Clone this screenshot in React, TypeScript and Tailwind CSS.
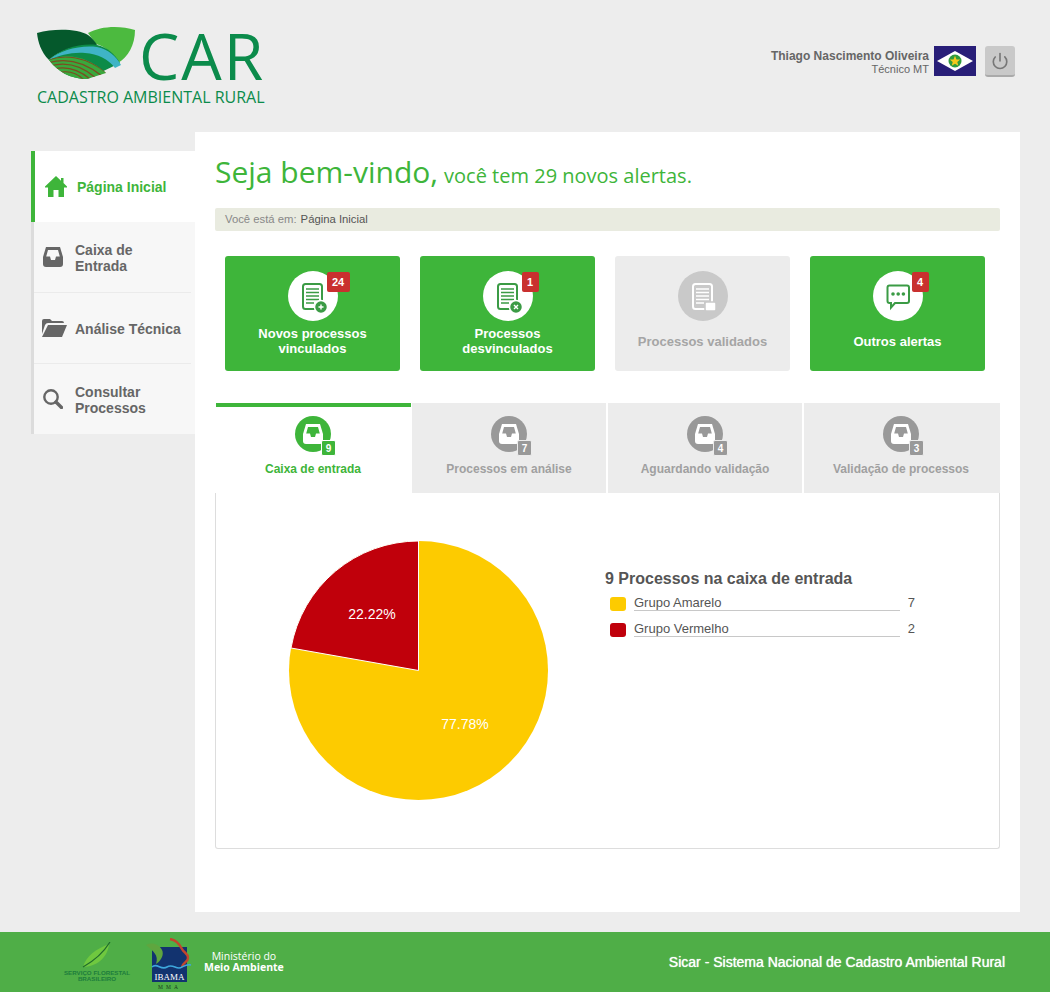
import { Power } from "lucide-react";
import clsx from "clsx";

const GREEN = "#3eb53a";

function TrayIcon({ color, inner, className }: { color: string; inner: string; className?: string }) {
  return (
    <svg viewBox="0 0 20 20" className={className}>
      <path d="M3 0H17L20 10V17Q20 20 17 20H3Q0 20 0 17V10Z" fill={color} />
      <path d="M5 3H15L16.8 9.5H13L12 13H8L7 9.5H3.2Z" fill={inner} />
    </svg>
  );
}

function HomeIcon() {
  return (
    <svg viewBox="0 0 22 21" className="w-[22px] h-[21px] shrink-0" fill={GREEN}>
      <path d="M11 0L16 4.7V2H18.5V7L22 10.5V11.5H19V21H13.5V14H8.5V21H3V11.5H0V10.5Z" />
    </svg>
  );
}

function FolderIcon() {
  return (
    <svg viewBox="0 0 25 18" className="w-[25px] h-[18px] shrink-0 -ml-px" fill="#666">
      <path d="M0 15V2Q0 0 2 0H8L10 2H20Q22 2 22 4H6Q4 4 3 6Z" />
      <path d="M6 6H25L20 18H0Z" />
    </svg>
  );
}

function SearchIcon() {
  return (
    <svg viewBox="0 0 20 20" className="w-5 h-5 shrink-0" fill="none" stroke="#666">
      <circle cx="8" cy="8" r="6.7" strokeWidth="2.4" />
      <path d="M13 13L18.5 18.5" strokeWidth="3.4" strokeLinecap="round" />
    </svg>
  );
}

function Logo() {
  return (
    <svg viewBox="30 20 110 70" className="w-[110px] h-[70px] shrink-0">
      <defs>
        <clipPath id="field">
          <path d="M49 60C60 55 75 55 88 61C97 65 103 70 106 73L87 79C70 79 57 71 49 60Z" />
        </clipPath>
      </defs>
      <path d="M88 33C100 26 120 25 135 30C135 45 128 57 118 63C112 52 104 46 96 44Z" fill="#4cba3f" />
      <path d="M37 33C55 28 78 29 88 35C92 38 95 41 97 45C80 44 60 49 49 60C41 52 38 42 37 33Z" fill="#05592c" />
      <path d="M49 60C60 49 80 43 97 45C107 47 115 54 120 63L87 79C70 79 57 71 49 60Z" fill="#0d8b47" />
      <path d="M49 60C60 50 80 45 97 47C108 49 116 56 121 65L115 68C108 59 98 54 85 53C72 52 60 55 49 60Z" fill="#3fb4c6" />
      <g clipPath="url(#field)">
        <rect x="45" y="50" width="65" height="32" fill="#3aa83c" />
        <g fill="none" stroke="#7f4a22" strokeWidth="1.1">
          <path d="M48 60C64 54 86 56 108 74" />
          <path d="M48 63C64 58 82 60 102 76" />
          <path d="M50 66C64 62 80 64 96 78" />
          <path d="M54 69C66 66 78 69 90 79" />
          <path d="M58 73C68 70 76 72 84 80" />
        </g>
      </g>
    </svg>
  );
}

function Flag() {
  return (
    <svg viewBox="0 0 42 30" className="w-[42px] h-[30px] shrink-0">
      <rect width="42" height="30" fill="#281e78" />
      <path d="M3 15L21 5L39 15L21 25Z" fill="#fff" />
      <circle cx="21" cy="15" r="6.5" fill="#2f9b3e" />
      <path d="M21 9.8L22.5 13.4L26.2 13.6L23.3 16L24.3 19.8L21 17.7L17.7 19.8L18.7 16L15.8 13.6L19.5 13.4Z" fill="#f5c91b" />
    </svg>
  );
}

const NAV = [
  { label: "Caixa de Entrada", icon: <TrayIcon color="#666" inner="#f7f7f7" className="w-5 h-5" /> },
  { label: "Análise Técnica", icon: <FolderIcon /> },
  { label: "Consultar Processos", icon: <SearchIcon /> },
];

function Sidebar() {
  return (
    <aside className="w-[164px] shrink-0 mt-[19px] self-start">
      <div className="h-[71px] bg-white border-l-4 border-[#3eb53a] flex items-center pl-[10px] gap-[10px]">
        <HomeIcon />
        <span className="text-sm font-bold text-[#3eb53a]">Página Inicial</span>
      </div>
      <div className="bg-[#f7f7f7] border-l-[3px] border-[#dcdcdc]">
        {NAV.map((item, i) => (
          <div key={item.label} className={clsx("flex items-center pl-[9px] gap-3 mr-1", i < 2 ? "h-[71px] border-b border-[#ebebeb]" : "h-[70px]")}>
            <span className="w-5 shrink-0 flex justify-start">{item.icon}</span>
            <span className="text-sm font-bold leading-4 text-[#666] w-[108px] pt-px">{item.label}</span>
          </div>
        ))}
      </div>
    </aside>
  );
}

function DocIcon({ color, mark }: { color: string; mark: "plus" | "x" | "none" }) {
  return (
    <svg viewBox="0 0 50 50" className="w-[50px] h-[50px]">
      <rect x="15" y="13" width="19" height="25" rx="2.5" fill="none" stroke={color} strokeWidth="2" />
      <g stroke={color} strokeWidth="1.4">
        <path d="M18 18H31M18 21.5H31M18 25H31M18 28.5H31M18 32H26" />
      </g>
      {mark === "none" ? (
        <rect x="27" y="31" width="11" height="9" rx="1.5" fill="#fff" stroke="#c9c9c9" strokeWidth="1.5" />
      ) : (
        <>
          <circle cx="33" cy="36" r="6.5" fill={color} stroke="#fff" strokeWidth="1.5" />
          <path d={mark === "plus" ? "M30.5 36H35.5M33 33.5V38.5" : "M31 34L35 38M35 34L31 38"} stroke="#fff" strokeWidth="1.4" />
        </>
      )}
    </svg>
  );
}

function ChatIcon() {
  return (
    <svg viewBox="0 0 50 50" className="w-[50px] h-[50px]">
      <path d="M16.5 14.5H34Q36 14.5 36 16.5V30Q36 32 34 32H22L18 36.5V32H16.5Q14.5 32 14.5 30V16.5Q14.5 14.5 16.5 14.5Z" fill="none" stroke="#3b9b45" strokeWidth="2" />
      <circle cx="20" cy="23" r="1.8" fill="#3b9b45" />
      <circle cx="25.2" cy="23" r="1.8" fill="#3b9b45" />
      <circle cx="30.4" cy="23" r="1.8" fill="#3b9b45" />
    </svg>
  );
}

const CARDS = [
  { title: "Novos processos vinculados", badge: "24", mark: "plus" as const },
  { title: "Processos desvinculados", badge: "1", mark: "x" as const },
  { title: "Processos validados", mark: "none" as const, off: true },
  { title: "Outros alertas", badge: "4", chat: true, mark: "none" as const },
];

function Card({ title, badge, mark, off, chat }: { title: string; badge?: string; mark: "plus" | "x" | "none"; off?: boolean; chat?: boolean }) {
  return (
    <div className={clsx("w-[175px] h-[115px] rounded-[3px] flex flex-col items-center pt-[15px]", off ? "bg-[#ececec]" : "bg-[#3eb53a]")}>
      <div className={clsx("relative w-[50px] h-[50px] rounded-full shrink-0", off ? "bg-[#c9c9c9]" : "bg-white")}>
        {chat ? <ChatIcon /> : <DocIcon color={off ? "#fff" : "#3b9b45"} mark={mark} />}
        {badge && (
          <span className={clsx("absolute top-[1px] left-[39px] h-[20px] rounded-[2px] bg-[#c9302f] text-white text-[11px] font-bold flex items-center justify-center", badge.length > 1 ? "w-[23px]" : "w-[17px]")}>
            {badge}
          </span>
        )}
      </div>
      <div className={clsx("flex-1 flex items-center justify-center text-center text-[13px] leading-[15px] font-bold pb-[10px] w-[130px]", off ? "text-[#a5a5a5]" : "text-white")}>
        {title}
      </div>
    </div>
  );
}

const TABS = [
  { label: "Caixa de entrada", count: 9, width: "w-[195px]" },
  { label: "Processos em análise", count: 7, width: "w-[194px]" },
  { label: "Aguardando validação", count: 4, width: "w-[194px]" },
  { label: "Validação de processos", count: 3, width: "w-[196px]" },
];

function Tabs() {
  return (
    <div className="flex gap-[2px] ml-px h-[90px] mt-8">
      {TABS.map((tab, i) => {
        const active = i === 0;
        const color = active ? GREEN : "#999";
        return (
          <div
            key={tab.label}
            className={clsx(
              "flex flex-col items-center",
              tab.width,
              active ? "bg-white border-t-4 border-[#3eb53a] pt-[9px] pr-px -mr-px" : "bg-[#ececec] pt-[13px]",
              i === 3 && "pr-[2px]"
            )}
          >
            <div className="relative w-9 h-9 rounded-full flex items-center justify-center" style={{ backgroundColor: color }}>
              <TrayIcon color="#fff" inner={color} className="w-5 h-5" />
              <span
                className={clsx("absolute left-[26px] top-[24px] w-[15px] h-4 rounded-[2px] text-white text-[10px] font-bold flex items-center justify-center border", active ? "border-white" : "border-[#ececec]")}
                style={{ backgroundColor: color }}
              >
                {tab.count}
              </span>
            </div>
            <span className={clsx("mt-[9px] text-xs font-bold", active ? "text-[#3eb53a]" : "text-[#a0a0a0]")}>{tab.label}</span>
          </div>
        );
      })}
    </div>
  );
}

function Pie() {
  return (
    <svg viewBox="0 0 262 262" className="w-[262px] h-[262px] shrink-0">
      <circle cx="130.5" cy="130.5" r="129.5" fill="#fdcb00" />
      <path d="M130.5 130.5V1A129.5 129.5 0 0 0 3 108Z" fill="#c0000b" stroke="#fff" strokeWidth="1" />
      <text x="84" y="79" textAnchor="middle" fill="#fff" fontSize="14" fontFamily="Liberation Sans, sans-serif">22.22%</text>
      <text x="177" y="189" textAnchor="middle" fill="#fff" fontSize="14" fontFamily="Liberation Sans, sans-serif">77.78%</text>
    </svg>
  );
}

const LEGEND = [
  { label: "Grupo Amarelo", value: 7, swatch: "bg-[#fdcb00]" },
  { label: "Grupo Vermelho", value: 2, swatch: "bg-[#c0000b]" },
];

function ForestLogo() {
  return (
    <div className="w-[64px] flex flex-col items-center">
      <svg viewBox="0 0 30 26" className="w-[30px] h-[26px]">
        <path d="M1 25C4 14 14 7 27 2C26 13 18 24 1 25Z" fill="#6fc83f" />
        <path d="M1 25C10 20 20 13 28 0" fill="none" stroke="#1f6b2c" strokeWidth="1.2" />
      </svg>
      <span className="mt-[2px] text-[6.2px] leading-[6px] font-bold text-[#1d7d3c] text-center whitespace-nowrap">SERVIÇO FLORESTAL<br />BRASILEIRO</span>
    </div>
  );
}

function IbamaLogo() {
  return (
    <svg viewBox="0 0 50 55" className="w-[50px] h-[55px] shrink-0">
      <rect x="8" y="9" width="35" height="35" fill="#12336f" />
      <path d="M2 7C8 4 15 6 18 12C20 16 18 22 12 26C15 17 9 13 2 7Z" fill="#5fa63f" />
      <path d="M26 1C33 2 36 7 38 11C40 15 44 15 44 20C44 24 39 24 38 29" fill="none" stroke="#c2452d" strokeWidth="2.4" />
      <path d="M8 29C13 24 17 33 23 29C29 25 33 33 38 29C40 28 43 26 47 27" fill="none" stroke="#3ea7dc" strokeWidth="1.6" />
      <text x="25.5" y="42" textAnchor="middle" fill="#fff" fontSize="9" fontFamily="Liberation Serif, serif">IBAMA</text>
      <text x="25.5" y="51" textAnchor="middle" fill="#17351f" fontSize="5.5" letterSpacing="3" fontFamily="Liberation Serif, serif">MMA</text>
    </svg>
  );
}

export default function App() {
  return (
    <div className="w-[1050px] h-[992px] bg-[#ededed] flex flex-col overflow-hidden font-['Liberation_Sans',sans-serif]">
      <header className="h-[132px] shrink-0 flex pl-[30px] pr-[35px]">
        <div className="pt-5">
          <div className="flex items-start h-[70px]">
            <Logo />
            <span className="ml-[-1px] mt-[6px] text-[64px] leading-[60px] tracking-[2px] font-medium font-['Open_Sans',sans-serif] text-[#0b8b4b]">CAR</span>
          </div>
          <div className="pl-[7px] -mt-[2px] text-[16px] leading-[18px] font-medium font-['Open_Sans',sans-serif] text-[#0b8b4b] whitespace-nowrap">CADASTRO AMBIENTAL RURAL</div>
        </div>
        <div className="ml-auto flex items-start pt-[46px]">
          <div className="text-right pt-1 mr-[5px]">
            <div className="text-xs leading-[13px] font-bold text-[#666]">Thiago Nascimento Oliveira</div>
            <div className="text-[11px] leading-3 text-[#666]">Técnico MT</div>
          </div>
          <Flag />
          <button className="ml-[9px] w-[30px] h-[31px] rounded-[3px] bg-[#c9c9c9] border-b-2 border-[#aaa] flex items-center justify-center">
            <Power className="w-[18px] h-[18px] text-[#777]" strokeWidth={2.2} />
          </button>
        </div>
      </header>

      <div className="flex pl-[31px] h-[780px] shrink-0">
        <Sidebar />
        <main className="w-[825px] bg-white px-5 pt-[22px]">
          <h1 className="flex items-baseline gap-[6px] text-[#3eb53a] font-['Open_Sans',sans-serif] text-[30px] leading-[36px] whitespace-nowrap">
            <span>Seja bem-vindo,</span>
            <span className="text-[20px] leading-none">você tem 29 novos alertas.</span>
          </h1>
          <div className="mt-[18px] h-[23px] rounded-[2px] bg-[#e9ebe0] px-[10px] flex items-center text-[11.3px] gap-1">
            <span className="text-[#888]">Você está em:</span>
            <span className="text-[#555]">Página Inicial</span>
          </div>
          <div className="mt-[25px] px-[10px] flex gap-5">
            {CARDS.map((card) => (
              <Card key={card.title} {...card} />
            ))}
          </div>
          <Tabs />
          <div className="h-[356px] border border-t-0 border-[#dddddd] rounded-b-[3px] flex pl-[72px] pt-[47px]">
            <Pie />
            <div className="ml-[55px] mt-[29px] w-[310px] text-[#555]">
              <h2 className="text-base font-bold leading-5 -mb-1">9 Processos na caixa de entrada</h2>
              {LEGEND.map((row) => (
                <div key={row.label} className="flex items-end h-[26px] pl-[5px]">
                  <span className={clsx("w-4 h-[14px] rounded-[3px] mr-2 shrink-0", row.swatch)} />
                  <span className="w-[266px] border-b border-[#c8c8c8] text-[13px] leading-[15px]">{row.label}</span>
                  <span className="ml-2 text-[13px] leading-[15px] pb-px">{row.value}</span>
                </div>
              ))}
            </div>
          </div>
        </main>
      </div>

      <footer className="mt-5 h-[60px] shrink-0 bg-[#4fae47] flex items-center pl-[65px] pr-[45px]">
        <ForestLogo />
        <div className="ml-[15px] mt-[7px]"><IbamaLogo /></div>
        <div className="ml-[10px] text-center text-white font-['Open_Sans',sans-serif] text-[10.5px] leading-[11px]">
          <div>Ministério do</div>
          <div className="font-bold">Meio Ambiente</div>
        </div>
        <div className="ml-auto text-white text-sm [text-shadow:0_0_1px_#fff]">Sicar - Sistema Nacional de Cadastro Ambiental Rural</div>
      </footer>
    </div>
  );
}
